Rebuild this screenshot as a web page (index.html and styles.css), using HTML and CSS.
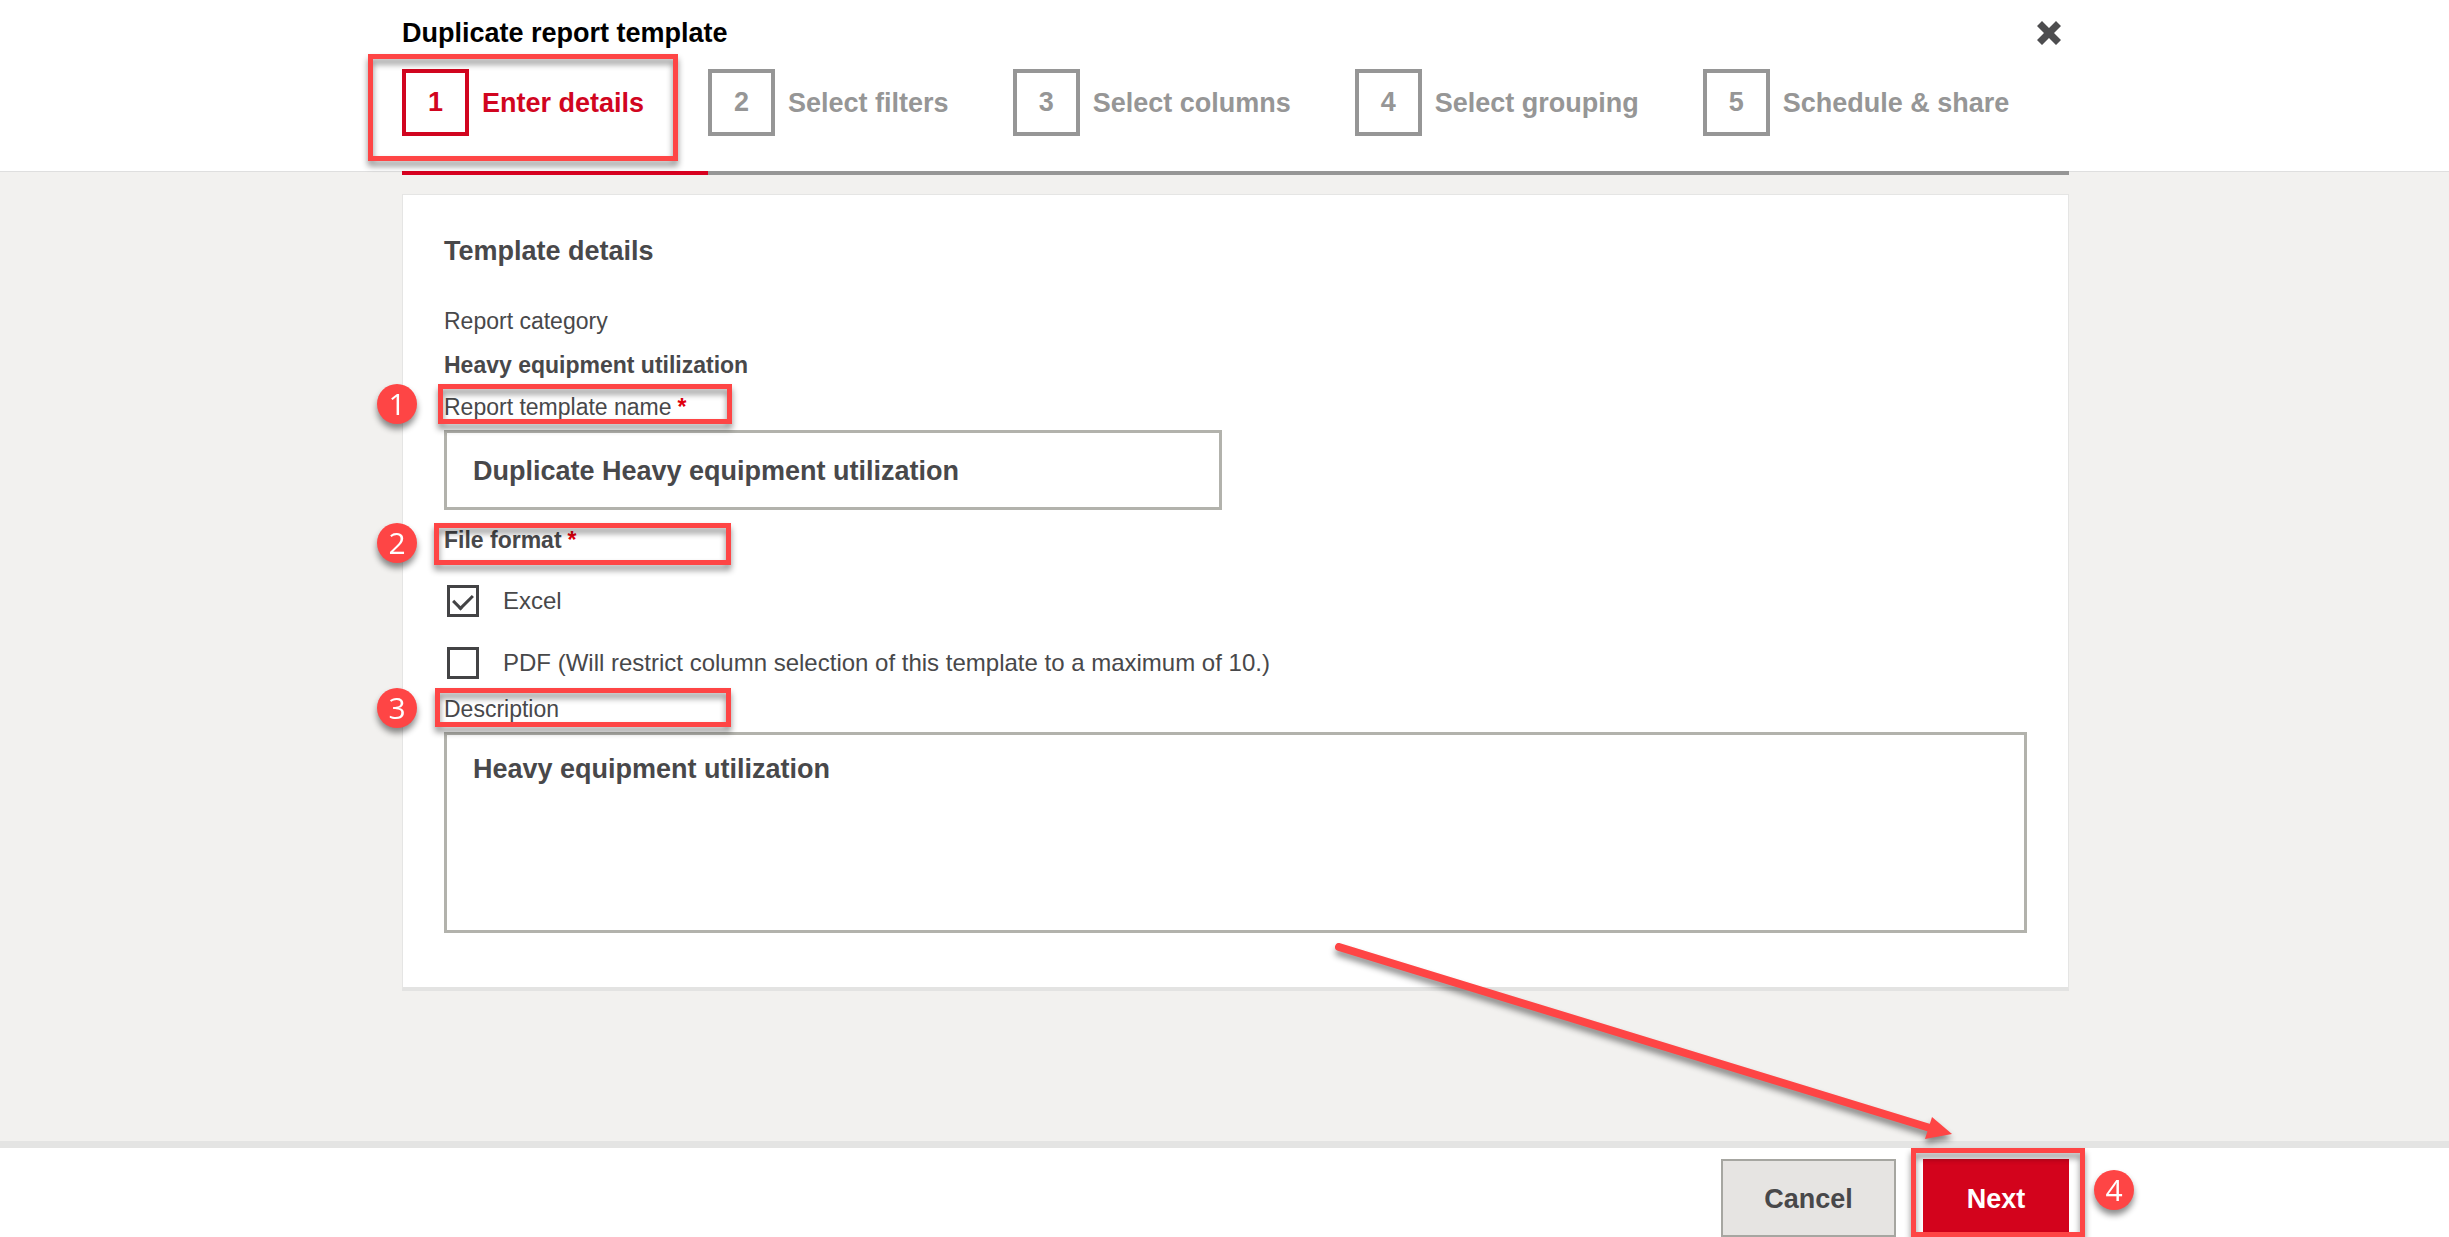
FILE: index.html
```
<!DOCTYPE html>
<html lang="en">
<head>
    <meta charset="UTF-8">
    <title>Duplicate report template</title>
    <link rel="stylesheet" href="styles.css">
</head>
<body>
<header class="header">
    <div class="wrap">
        <div class="title-row">
            <h1>Duplicate report template</h1>
            <button type="button" class="close" aria-label="Close">
                <svg viewBox="0 0 24 24"><path d="M5 0L12 7L19 0L24 5L17 12L24 19L19 24L12 17L5 24L0 19L7 12L0 5Z"/></svg>
            </button>
        </div>
        <ol class="steps">
            <li class="active"><span class="num">1</span>Enter details<i class="mark mark-step"></i></li>
            <li><span class="num">2</span>Select filters</li>
            <li><span class="num">3</span>Select columns</li>
            <li><span class="num">4</span>Select grouping</li>
            <li><span class="num">5</span>Schedule &amp; share</li>
        </ol>
    </div>
</header>

<main class="main">
    <form class="card wrap" id="details">
        <h2>Template details</h2>
        <p class="category">Report category</p>
        <p class="category-name">Heavy equipment utilization</p>

        <div class="field-head">
            <label for="name">Report template name<b class="req">*</b></label>
            <i class="mark mark-name"></i>
            <span class="badge badge-name">1</span>
        </div>
        <input type="text" class="text" id="name" value="Duplicate Heavy equipment utilization">

        <fieldset>
            <legend class="field-head">
                File format<b class="req">*</b>
                <i class="mark mark-format"></i>
                <span class="badge badge-format">2</span>
            </legend>
            <label class="check"><input type="checkbox" checked>Excel</label>
            <label class="check"><input type="checkbox">PDF (Will restrict column selection of this template to a maximum of 10.)</label>
        </fieldset>

        <div class="field-head">
            <label for="desc">Description</label>
            <i class="mark mark-desc"></i>
            <span class="badge badge-desc">3</span>
        </div>
        <textarea class="text" id="desc">Heavy equipment utilization</textarea>
    </form>
</main>

<footer class="footer">
    <div class="wrap buttons">
        <button type="button" class="btn">Cancel</button>
        <div class="next">
            <button type="submit" form="details" class="btn btn-next">Next</button>
            <svg class="arrow" viewBox="0 0 630 205">
                <path d="M9 7L600 188" stroke="#fe4545" stroke-width="8" stroke-linecap="round"/>
                <path d="M602 177L622 194L595 199Z" fill="#fe4545"/>
            </svg>
            <i class="mark mark-next"></i>
            <span class="badge badge-next">4</span>
        </div>
    </div>
</footer>
</body>
</html>
```
FILE: styles.css
```
*{margin:0;padding:0;box-sizing:border-box;}
body{
    display: flex;
    flex-direction: column;
    min-height: 100vh;
    padding-left: 22px;
    background: #f2f1ef;
    font: 23px/28px "Liberation Sans",Arial,sans-serif;
    color: #48484a;
}
button,input,textarea{
    font-family: inherit;
    color: inherit;
}
.wrap{
    width: 100%;
    max-width: 1667px;
    margin: 0 auto;
}

/* header */
.header{
    margin-left: -22px;
    padding: 17px 0 0 22px;
    background: #fff;
    border-bottom: 1px solid #dfdfdf;
}
.title-row{
    display: flex;
    justify-content: space-between;
    align-items: center;
    margin-bottom: 20px;
    padding-right: 8px;
}
h1{
    font-size: 27px;
    line-height: 32px;
    color: #000;
}
.close{
    width: 24px;
    height: 24px;
    border: none;
    background: none;
    cursor: pointer;
}
.close svg{
    display: block;
    fill: #4d4d4f;
}
.steps{
    display: flex;
    margin-bottom: -4px;
    list-style: none;
    font-size: 27px;
    font-weight: bold;
    color: #969696;
}
.steps li{
    position: relative;
    display: flex;
    align-items: center;
    gap: 13px;
    padding: 0 64px 35px 0;
    border-bottom: 4px solid #969696;
    white-space: nowrap;
}
.steps li:last-child{
    flex: 1;
    padding-right: 0;
}
.steps .active{
    color: #d1051f;
    border-color: #d7001f;
}
.num{
    width: 67px;
    height: 67px;
    border: 4px solid;
    line-height: 59px;
    text-align: center;
}

/* card */
.main{
    flex: 1;
    padding: 22px 0;
}
.card{
    padding: 38px 41px 54px;
    background: #fff;
    border: 1px solid #e5e5e4;
    border-bottom: 4px solid #e3e3e2;
}
h2{
    margin-bottom: 38px;
    font-size: 27px;
    line-height: 36px;
}
.category{
    margin-bottom: 16px;
}
.category-name{
    margin-bottom: 14px;
    font-weight: bold;
}
.field-head{
    position: relative;
    margin-bottom: 9px;
}
.req{
    margin-left: 6px;
    color: #e0000c;
}
.text{
    display: block;
    border: 3px solid #b2b2ac;
    background: #fff;
    font-size: 27px;
    font-weight: bold;
    outline: none;
}
input.text{
    width: 778px;
    max-width: 100%;
    height: 80px;
    margin-bottom: 16px;
    padding: 2px 26px 0;
}
textarea.text{
    width: 100%;
    height: 201px;
    padding: 18px 26px;
    line-height: 32px;
    resize: none;
}
fieldset{
    margin-bottom: 16px;
    border: none;
}
legend{
    width: 100%;
    font-weight: bold;
}
legend.field-head{
    margin-bottom: 31px;
}
.check{
    display: flex;
    align-items: center;
    gap: 24px;
    margin: 0 0 30px 3px;
    font-size: 24px;
    line-height: 32px;
}
.check:last-child{
    margin-bottom: 0;
}
.check input{
    appearance: none;
    width: 32px;
    height: 32px;
    border: 3px solid #434345;
    background: #fff;
}
.check input:checked::after{
    content: "";
    display: block;
    width: 9px;
    height: 16px;
    margin: 2px auto;
    border: solid #434345;
    border-width: 0 3px 3px 0;
    transform: rotate(45deg);
}

/* footer */
.footer{
    margin-left: -22px;
    padding: 11px 0 0 22px;
    background: #fff;
    border-top: 7px solid #e4e4e3;
}
.buttons{
    display: flex;
    justify-content: flex-end;
    gap: 27px;
}
.btn{
    display: block;
    width: 175px;
    height: 78px;
    padding-top: 2px;
    border: 2px solid #a6a6a1;
    background: #e6e4e2;
    font-size: 27px;
    font-weight: bold;
    cursor: pointer;
}
.btn-next{
    width: 146px;
    border: none;
    background: #d3031c;
    color: #fff;
}
.next{
    position: relative;
}

/* callouts */
.mark,.badge,.arrow{
    position: absolute;
    filter: drop-shadow(0 5px 3px rgba(0,0,0,.45));
    pointer-events: none;
}
.mark{
    border: 5px solid #fe4545;
}
.mark-step{
    left: -34px;
    top: -15px;
    width: 310px;
    height: 107px;
}
.mark-name{
    left: -6px;
    top: -9px;
    width: 294px;
    height: 40px;
}
.mark-format{
    left: -10px;
    top: -3px;
    width: 297px;
    height: 42px;
}
.mark-desc{
    left: -9px;
    top: -7px;
    width: 296px;
    height: 39px;
}
.mark-next{
    left: -12px;
    top: -11px;
    width: 174px;
    height: 89px;
}
.badge{
    left: -67px;
    width: 40px;
    height: 40px;
    border-radius: 50%;
    background: #fe4545;
    font: 30px/40px "Open Sans",sans-serif;
    color: #fff;
    text-align: center;
}
.badge-name{top: -9px;}
.badge-format{top: -3px;}
.badge-desc{top: -7px;}
.badge-next{
    left: 171px;
    top: 11px;
}
.arrow{
    right: 109px;
    bottom: 92px;
    width: 630px;
    height: 205px;
    overflow: visible;
}
```
